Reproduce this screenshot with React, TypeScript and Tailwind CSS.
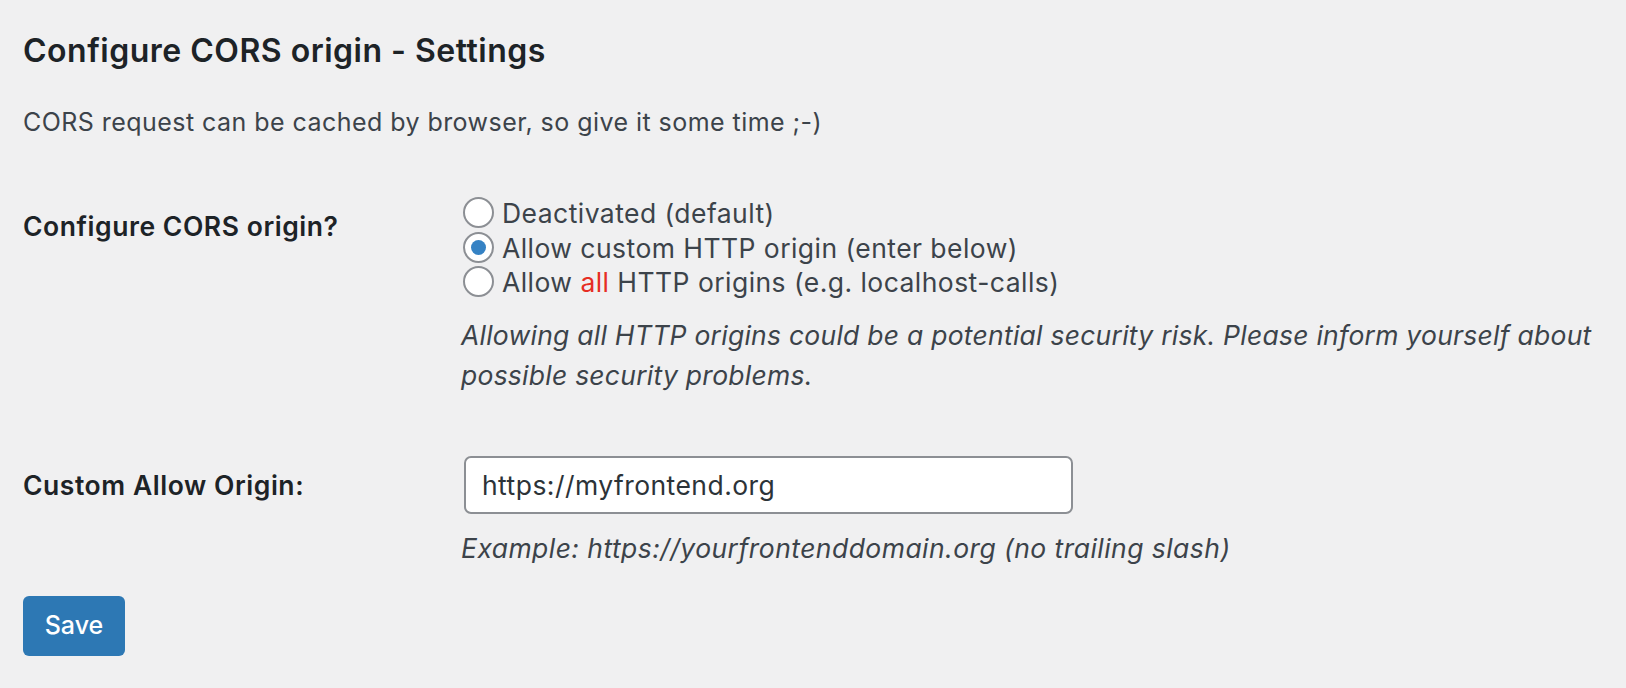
import React from "react";

function Radio({ checked, children }: { checked?: boolean; children: React.ReactNode }) {
  return (
    <label className="flex items-center h-[34.7px]">
      <span className="ml-[2px] w-[31px] h-[31px] rounded-full border-[2px] border-[#8c8f94] bg-white flex items-center justify-center shrink-0 -mt-[2px]">
        {checked && <span className="w-[15px] h-[15px] rounded-full bg-[#3582c4]" />}
      </span>
      <span className="ml-[8px] text-[26.5px] tracking-[0.45px] leading-[35px] text-[#3c434a]">{children}</span>
    </label>
  );
}

export default function App() {
  return (
    <div className="min-h-screen bg-[#f0f0f1] pl-[23px] pt-[31px] font-[family-name:Inter,sans-serif]">
      <h2 className="text-[32px] tracking-[0.5px] leading-[40px] font-semibold text-[#1d2327]">
        Configure CORS origin - Settings
      </h2>
      <p className="mt-[33px] text-[25px] tracking-[0.45px] leading-[36px] text-[#3c434a]">
        CORS request can be cached by browser, so give it some time ;-)
      </p>

      <div className="flex items-start mt-[56px]">
        <div className="w-[438px] shrink-0 pt-[12px] text-[26.5px] tracking-[0.55px] leading-[36px] font-semibold text-[#1d2327]">
          Configure CORS origin?
        </div>
        <div className="flex flex-col">
          <Radio>Deactivated (default)</Radio>
          <Radio checked>Allow custom HTTP origin (enter below)</Radio>
          <Radio>
            Allow <span className="text-[#e62d23]">all</span> HTTP origins (e.g. localhost-calls)
          </Radio>
          <p className="mt-[15px] text-[26.5px] tracking-[0.25px] leading-[40px] italic text-[#3c434a]">
            Allowing all HTTP origins could be a potential security risk. Please inform yourself about
            <br />
            possible security problems.
          </p>
        </div>
      </div>

      <div className="flex items-start mt-[61px]">
        <div className="w-[438px] shrink-0 pt-[11px] text-[26.5px] tracking-[0.55px] leading-[36px] font-semibold text-[#1d2327]">
          Custom Allow Origin:
        </div>
        <div className="flex flex-col">
          <input
            type="text"
            defaultValue="https://myfrontend.org"
            className="ml-[3px] w-[609px] h-[58px] rounded-[7px] border-[2px] border-[#8c8f94] bg-white px-[16px] text-[26.5px] tracking-[0.45px] text-[#2c3338] outline-none"
          />
          <p className="mt-[15px] text-[26.5px] tracking-[0.45px] leading-[38px] italic text-[#3c434a]">
            Example: https://yourfrontenddomain.org (no trailing slash)
          </p>
        </div>
      </div>

      <button className="mt-[29px] w-[102px] h-[60px] rounded-[6px] bg-[#2d78b4] text-white text-[25px] font-medium">
        Save
      </button>
    </div>
  );
}
